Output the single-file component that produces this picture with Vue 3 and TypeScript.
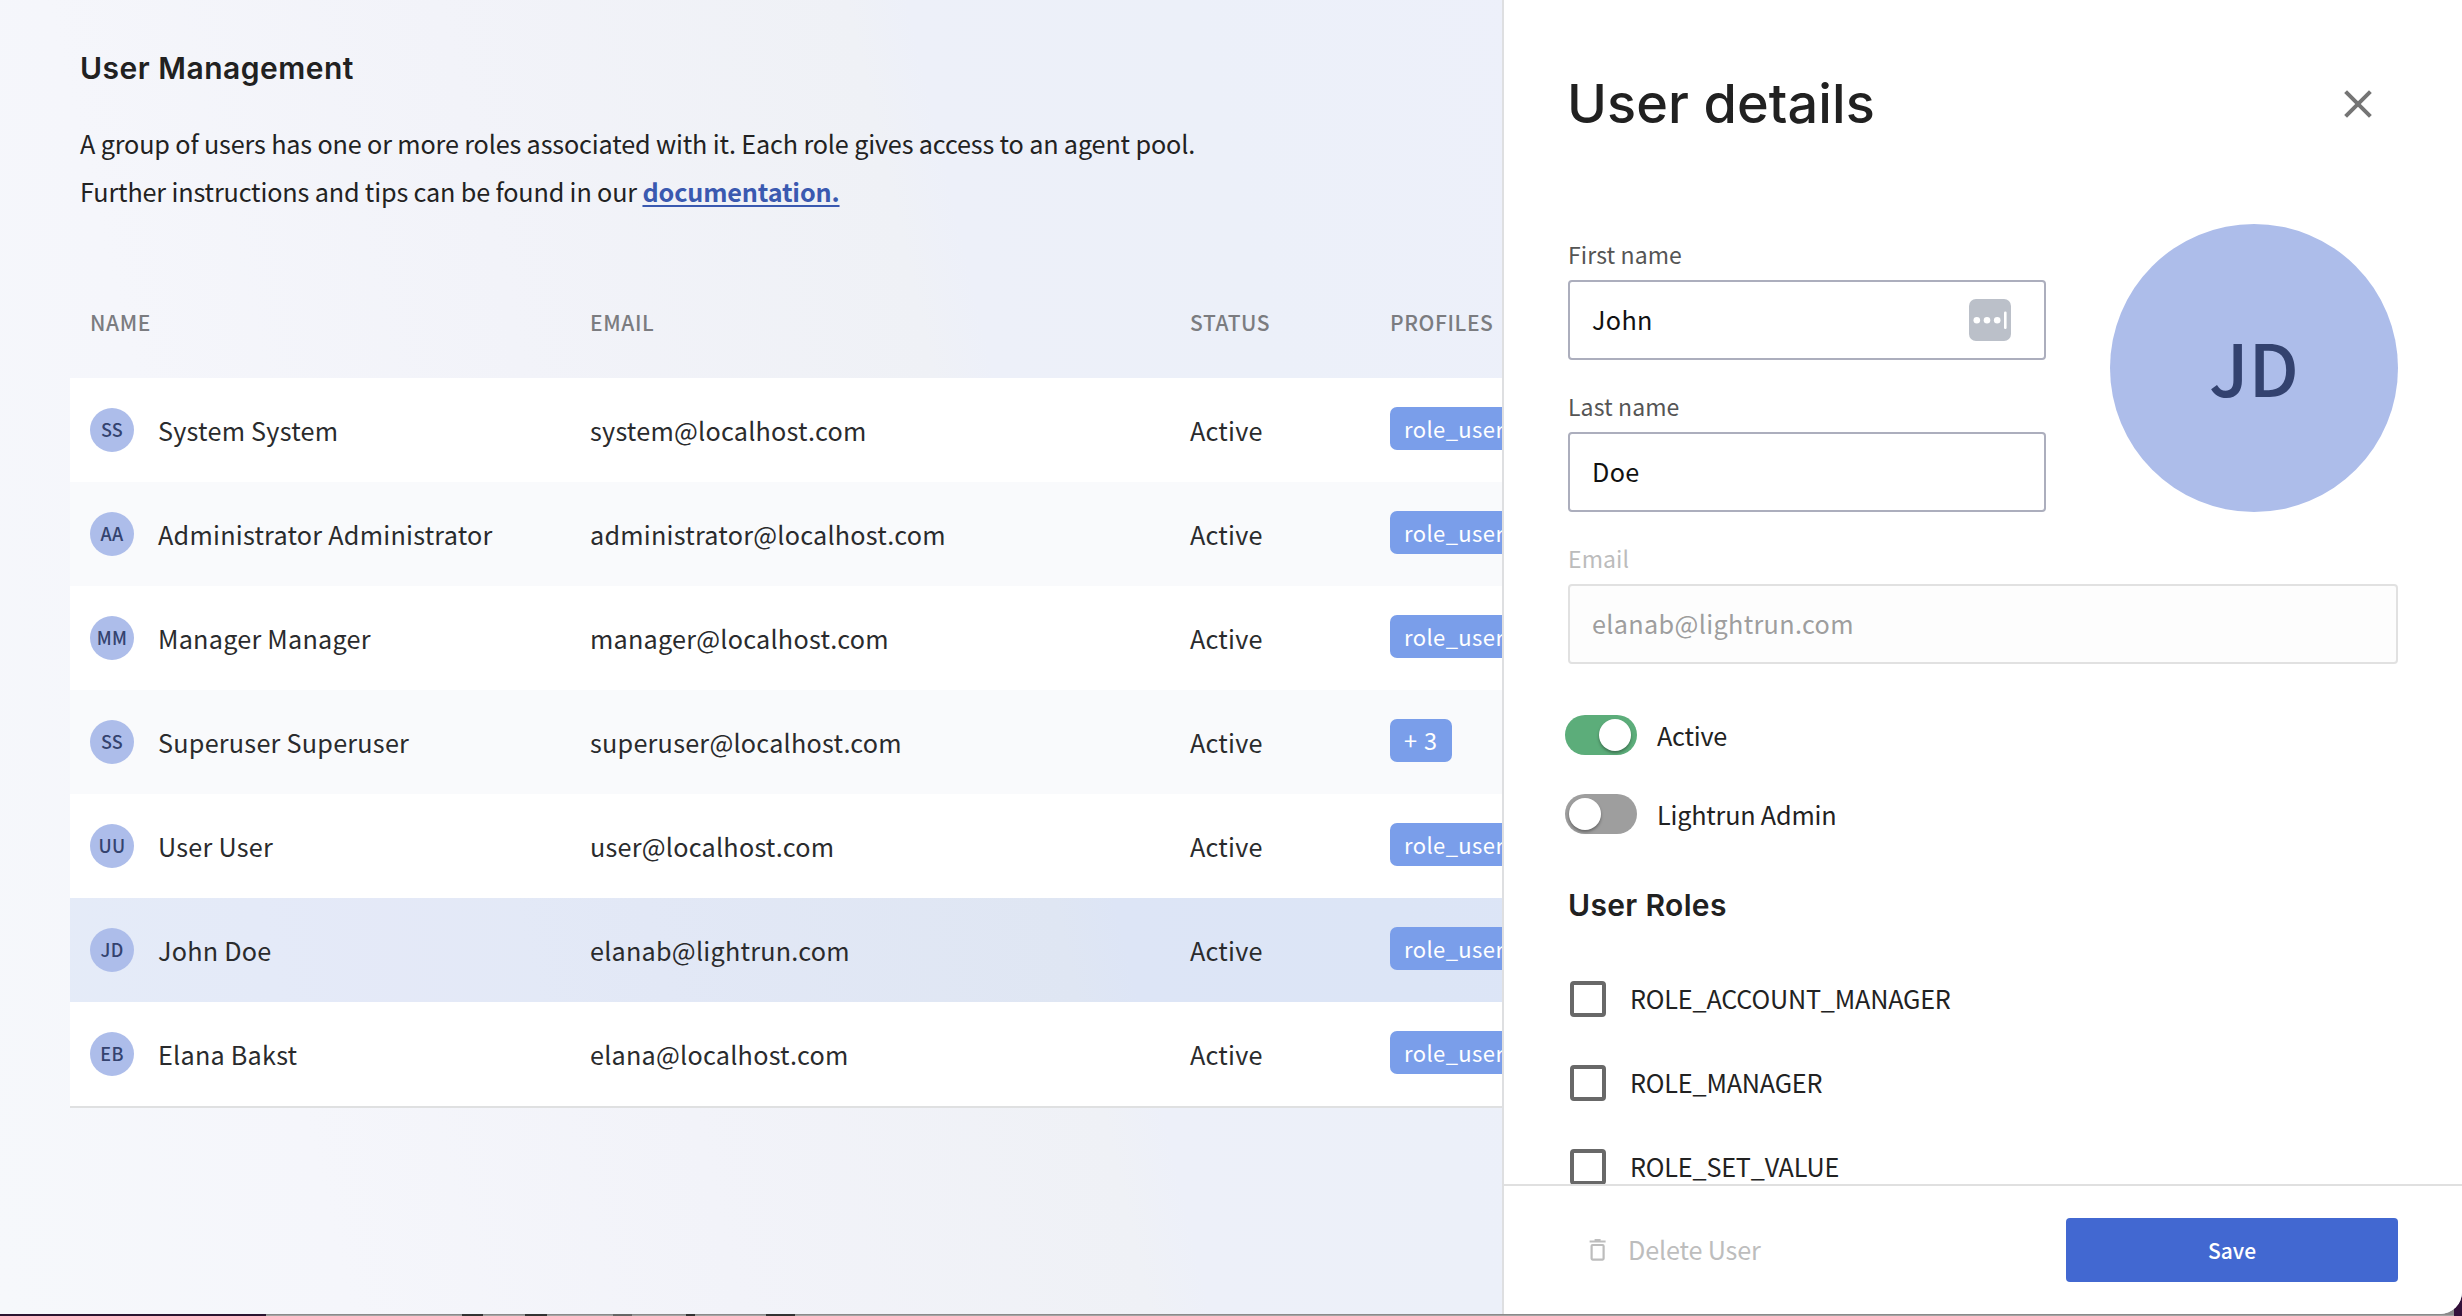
<script setup lang="ts">
import { ref } from 'vue'

interface User {
  initials: string
  name: string
  email: string
  profile: string
  count?: boolean
  selected?: boolean
}

const users: User[] = [
  { initials: 'SS', name: 'System System', email: 'system@localhost.com', profile: 'role_user' },
  { initials: 'AA', name: 'Administrator Administrator', email: 'administrator@localhost.com', profile: 'role_user' },
  { initials: 'MM', name: 'Manager Manager', email: 'manager@localhost.com', profile: 'role_user' },
  { initials: 'SS', name: 'Superuser Superuser', email: 'superuser@localhost.com', profile: '+ 3', count: true },
  { initials: 'UU', name: 'User User', email: 'user@localhost.com', profile: 'role_user' },
  { initials: 'JD', name: 'John Doe', email: 'elanab@lightrun.com', profile: 'role_user', selected: true },
  { initials: 'EB', name: 'Elana Bakst', email: 'elana@localhost.com', profile: 'role_user' },
]

const roles: string[] = ['ROLE_ACCOUNT_MANAGER', 'ROLE_MANAGER', 'ROLE_SET_VALUE']

const toggles = ref([
  { label: 'Active', on: true },
  { label: 'Lightrun Admin', on: false },
])
</script>

<template>
  <div class="desktop">
    <div class="window">
      <main class="page">
        <h1 class="page-title">User Management</h1>
        <p class="intro">
          A group of users has one or more roles associated with it. Each role gives access to an agent pool.<br />
          Further instructions and tips can be found in our <a class="doc" href="#">documentation.</a>
        </p>

        <section class="table">
          <div class="row head">
            <span>NAME</span><span>EMAIL</span><span>STATUS</span><span>PROFILES</span>
          </div>
          <div class="body">
            <div v-for="u in users" :key="u.email" class="row" :class="{ selected: u.selected }">
              <div class="name">
                <span class="avatar">{{ u.initials }}</span>
                <span>{{ u.name }}</span>
              </div>
              <span>{{ u.email }}</span>
              <span class="status">Active</span>
              <span class="badge" :class="{ count: u.count }">{{ u.profile }}</span>
            </div>
          </div>
        </section>
      </main>

      <aside class="panel">
        <div class="content">
          <header class="panel-head">
            <h2>User details</h2>
            <svg class="close" width="28" height="28" viewBox="0 0 28 28">
              <path d="M1.6 1.6 26.4 26.4M26.4 1.6 1.6 26.4" stroke="#757575" stroke-width="4" fill="none" />
            </svg>
          </header>

          <div class="identity">
            <div class="fields">
              <div class="field">
                <label>First name</label>
                <div class="input">
                  <span>John</span>
                  <svg width="42" height="42" viewBox="0 0 42 42">
                    <rect width="42" height="42" rx="7" fill="#bbc0c9" />
                    <circle cx="7.8" cy="21.3" r="3.3" fill="#fff" />
                    <circle cx="18" cy="21.3" r="3.3" fill="#fff" />
                    <circle cx="28.2" cy="21.3" r="3.3" fill="#fff" />
                    <rect x="35" y="12.5" width="2.6" height="17.5" rx="1.2" fill="#fff" />
                  </svg>
                </div>
              </div>
              <div class="field">
                <label>Last name</label>
                <div class="input"><span>Doe</span></div>
              </div>
            </div>
            <div class="portrait">JD</div>
          </div>

          <div class="field email disabled">
            <label>Email</label>
            <div class="input"><span>elanab@lightrun.com</span></div>
          </div>

          <div class="toggles">
            <div v-for="t in toggles" :key="t.label" class="toggle" @click="t.on = !t.on">
              <span class="track" :class="{ on: t.on }"><i></i></span>
              <span class="toggle-label">{{ t.label }}</span>
            </div>
          </div>

          <h3>User Roles</h3>
          <div class="roles">
            <div v-for="r in roles" :key="r" class="role">
              <span class="box"></span>
              <span class="role-name">{{ r }}</span>
            </div>
          </div>
        </div>

        <footer class="foot">
          <div class="delete">
            <svg width="18" height="22" viewBox="0 0 18 22">
              <path d="M5.6 0h6v1.5h5V3.6H.6V1.5h5z" fill="#bdbdbd" />
              <rect x="2.6" y="6" width="12" height="14.6" rx="1" fill="none" stroke="#bdbdbd" stroke-width="2.2" />
            </svg>
            <span>Delete User</span>
          </div>
          <button class="save" type="button">Save</button>
        </footer>
      </aside>
    </div>
  </div>
</template>

<style>
body {
  margin: 0;
}
</style>

<style scoped>
* {
  box-sizing: border-box;
}
h1,
h2,
h3,
p {
  margin: 0;
}
.desktop {
  width: 2462px;
  height: 1316px;
  overflow: hidden;
  background:
    linear-gradient(#333, #333) 462px 100% / 21px 2px no-repeat,
    linear-gradient(#333, #333) 525px 100% / 22px 2px no-repeat,
    linear-gradient(#666, #666) 613px 100% / 19px 2px no-repeat,
    linear-gradient(#333, #333) 686px 100% / 9px 2px no-repeat,
    linear-gradient(#333, #333) 766px 100% / 29px 2px no-repeat,
    linear-gradient(#2b1530, #2b1530) 0 100% / 266px 2px no-repeat,
    linear-gradient(#33103a, #33103a) 100% 100% / 8px 40px no-repeat,
    linear-gradient(#8a8a8a 0 1315px, #a3a3a3 1315px);
  font-family: "Noto Sans CJK SC", "Noto Sans", sans-serif;
  font-size: 25.2px;
  line-height: 36px;
  color: #2a2b2d;
}
.window {
  display: flex;
  width: 2462px;
  height: 1314px;
  border-radius: 0 0 22px 0;
  overflow: hidden;
  background: linear-gradient(77deg, #f6f8fb 0, #f5f6fb 340px, #f2f3f9 720px, #eff1f6 1120px, #edf0f9 1180px, #ecf0f9 1450px, #edf0fa 1800px);
}
.page {
  flex: 1;
  min-width: 0;
  padding-top: 48px;
  overflow: hidden;
}
.page-title {
  padding-left: 80px;
  font: 600 30px/40px Inter, sans-serif;
  letter-spacing: 0.5px;
  color: #212121;
}
.intro {
  margin-top: 31px;
  padding-left: 80px;
  line-height: 48px;
  letter-spacing: -0.15px;
  color: #222;
  white-space: nowrap;
}
.doc {
  font-weight: 700;
  color: #3a59b0;
  text-decoration: underline;
  text-decoration-thickness: 2px;
  text-underline-offset: 3px;
}
.table {
  width: 1900px;
  margin: 51px 0 0 70px;
}
.row {
  display: grid;
  grid-template-columns: 500px 600px 200px 1fr;
  align-items: center;
  height: 104px;
  padding-left: 20px;
  letter-spacing: 0.24px;
  white-space: nowrap;
}
.row.head {
  height: 112px;
  font-size: 21px;
  font-weight: 500;
  letter-spacing: 0.6px;
  color: #7b7c80;
}
.body {
  border-bottom: 2px solid #dfe0e1;
}
.body .row {
  background: #fff;
}
.body .row:nth-child(even) {
  background: #f9fafc;
}
.body .row.selected {
  background: rgba(64, 120, 220, 0.09);
}
.name {
  display: flex;
  align-items: center;
  gap: 24px;
}
.avatar {
  width: 44px;
  height: 44px;
  border-radius: 50%;
  background: #adbdea;
  color: #34436f;
  font-size: 18px;
  font-weight: 500;
  line-height: 43px;
  text-align: center;
}
.badge {
  justify-self: start;
  height: 43px;
  margin-top: -3px;
  padding: 0 14px;
  border-radius: 7px;
  background: #7a9eea;
  color: #fff;
  font-size: 22px;
  line-height: 42px;
  letter-spacing: 0.4px;
}
.badge.count {
  font-size: 23.5px;
  letter-spacing: 0.9px;
}
.panel {
  display: flex;
  flex-direction: column;
  width: 960px;
  border-left: 2px solid #dedfe1;
  background: #fff;
  color: #222;
}
.content {
  height: 1184px;
  padding: 64px 64px 0;
  overflow: hidden;
}
.panel-head {
  display: flex;
  align-items: center;
  justify-content: space-between;
  height: 80px;
  padding-right: 26px;
}
.panel-head h2 {
  margin-left: -1px;
  font: 500 54px/80px Inter, sans-serif;
  letter-spacing: 0.1px;
  color: #212121;
}
.identity {
  display: flex;
  justify-content: space-between;
  margin-top: 80px;
}
.fields {
  display: flex;
  flex-direction: column;
  gap: 30px;
  width: 478px;
  padding-top: 14px;
}
.field {
  display: flex;
  flex-direction: column;
  gap: 10px;
}
.field label {
  font-size: 23px;
  line-height: 32px;
  letter-spacing: 0.1px;
  color: #555;
}
.input {
  display: flex;
  align-items: center;
  justify-content: space-between;
  height: 80px;
  padding: 0 33px 0 22px;
  border: 2px solid #acaebd;
  border-radius: 4px;
  color: #111;
  letter-spacing: 0.35px;
}
.input span {
  padding-bottom: 2px;
}
.email {
  margin-top: 30px;
}
.disabled label {
  color: #bcbcbc;
}
.disabled .input {
  border-color: #e1e1e1;
  background: #fdfdfd;
  color: #9e9e9e;
}
.portrait {
  width: 288px;
  height: 288px;
  border-radius: 50%;
  background: #adbdea;
  color: #33426f;
  font-size: 72px;
  font-weight: 500;
  line-height: 284px;
  text-align: center;
}
.toggles {
  display: flex;
  flex-direction: column;
  gap: 39px;
  margin: 51px 0 0 -3px;
}
.toggle {
  display: flex;
  align-items: center;
  gap: 20px;
  height: 40px;
  letter-spacing: -0.2px;
}
.toggle-label {
  padding-bottom: 1px;
}
.track {
  display: flex;
  width: 72px;
  height: 40px;
  padding: 4px;
  border-radius: 20px;
  background: #9e9e9e;
}
.track i {
  width: 32px;
  height: 32px;
  border-radius: 50%;
  background: #fff;
  box-shadow: 0 2px 3px rgba(0, 0, 0, 0.35);
}
.track.on {
  justify-content: flex-end;
  padding-right: 6px;
  background: #5cad7a;
}
h3 {
  margin: 51px 0 0;
  font: 600 30px/40px Inter, sans-serif;
  letter-spacing: 0.35px;
  color: #212121;
}
.roles {
  display: flex;
  flex-direction: column;
  gap: 48px;
  margin: 56px 0 0 2px;
}
.role {
  display: flex;
  align-items: center;
  gap: 24px;
  height: 36px;
  letter-spacing: -0.18px;
}
.role-name {
  padding-bottom: 2px;
}
.box {
  width: 36px;
  height: 36px;
  border: 4px solid #686868;
  border-radius: 4px;
}
.foot {
  display: flex;
  align-items: center;
  justify-content: space-between;
  height: 130px;
  padding: 0 64px 0 85px;
  border-top: 2px solid #e0e0e0;
}
.delete {
  display: flex;
  align-items: center;
  gap: 21px;
  letter-spacing: -0.16px;
  color: #bdbdbd;
}
.delete span {
  padding-bottom: 2px;
}
.save {
  width: 332px;
  height: 64px;
  padding: 0;
  border: 0;
  border-radius: 4px;
  background: #4268d1;
  color: #fff;
  font: 500 21px/64px "Noto Sans CJK SC", sans-serif;
}
</style>
